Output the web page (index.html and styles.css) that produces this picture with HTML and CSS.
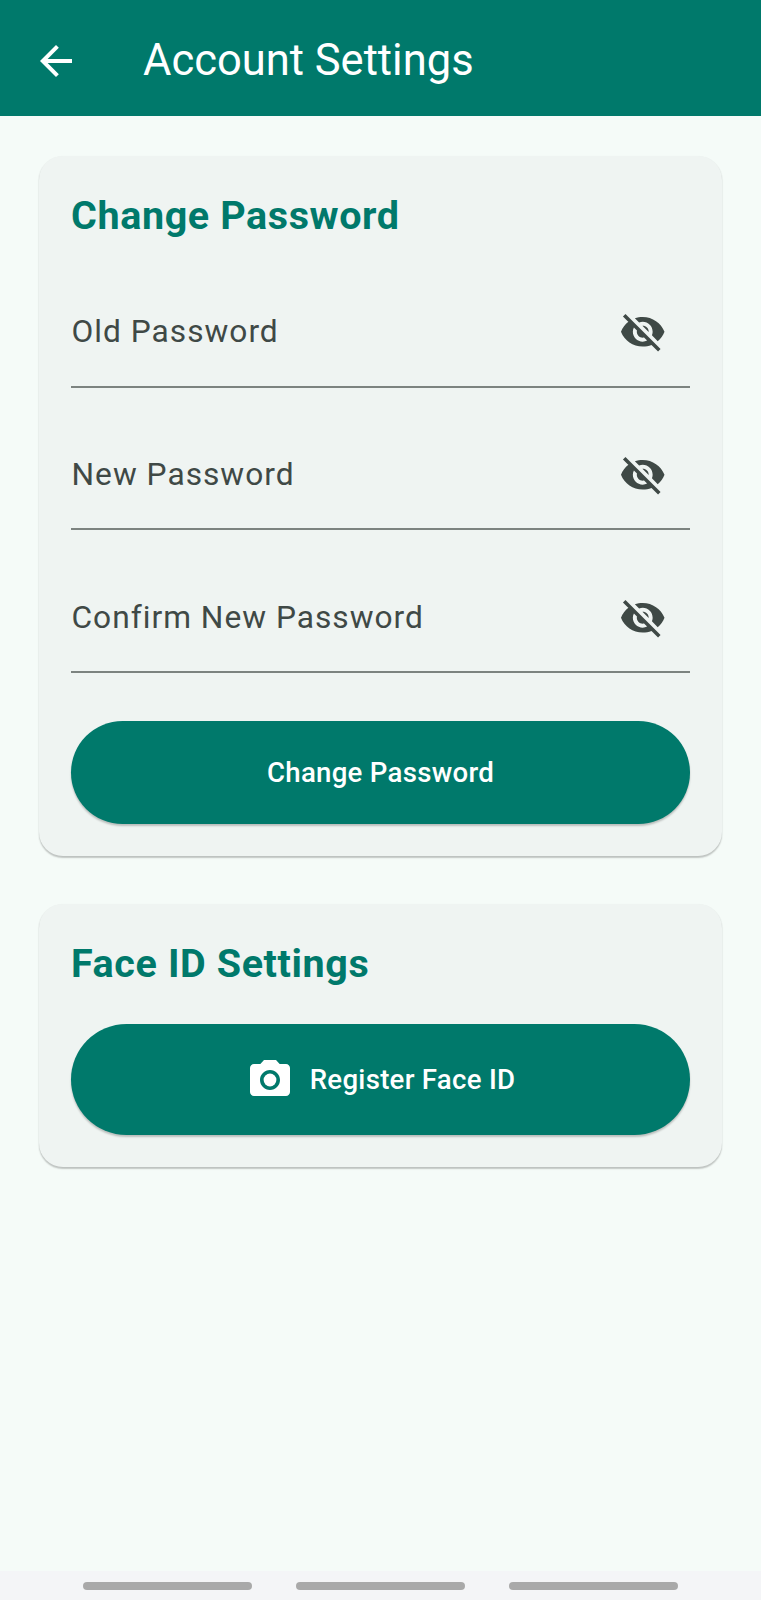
FILE: index.html
```html
<!DOCTYPE html>
<html lang="en">
<head>
<meta charset="utf-8">
<title>Account Settings</title>
<link rel="stylesheet" href="styles.css">
</head>
<body>
<svg class="symbols" aria-hidden="true">
  <symbol id="eye-off" viewBox="0 0 24 24"><path d="M12 7c2.76 0 5 2.24 5 5 0 .65-.13 1.26-.36 1.83l2.92 2.92c1.51-1.26 2.7-2.89 3.43-4.75-1.73-4.39-6-7.5-11-7.5-1.4 0-2.74.25-3.98.7l2.16 2.16C10.74 7.13 11.35 7 12 7zM2 4.27l2.28 2.28.46.46C3.08 8.3 1.78 10.02 1 12c1.73 4.39 6 7.5 11 7.5 1.55 0 3.03-.3 4.38-.84l.42.42L19.73 22 21 20.73 3.27 3 2 4.27zM7.53 9.8l1.55 1.55c-.05.21-.08.43-.08.65 0 1.66 1.34 3 3 3 .22 0 .44-.03.65-.08l1.55 1.55c-.67.33-1.41.53-2.2.53-2.76 0-5-2.24-5-5 0-.79.2-1.53.53-2.2zm4.31-.78l3.15 3.15.02-.16c0-1.66-1.34-3-3-3l-.17.01z"/></symbol>
</svg>
<div class="screen">
  <header class="app-bar">
    <svg class="back" viewBox="0 0 24 24"><path d="M20 11H7.83l5.59-5.59L12 4l-8 8 8 8 1.41-1.41L7.83 13H20v-2z"/></svg>
    <h1 class="title">Account Settings</h1>
  </header>
  <main class="content">
    <section class="card password-card">
      <h2 class="heading">Change Password</h2>
      <div class="fields">
        <div class="field"><span class="label">Old Password</span><svg class="eye"><use href="#eye-off"/></svg></div>
        <div class="field"><span class="label">New Password</span><svg class="eye"><use href="#eye-off"/></svg></div>
        <div class="field"><span class="label">Confirm New Password</span><svg class="eye"><use href="#eye-off"/></svg></div>
      </div>
      <button class="button change" type="button">Change Password</button>
    </section>
    <section class="card face-card">
      <h2 class="heading">Face ID Settings</h2>
      <button class="button register" type="button">
        <svg class="camera" viewBox="0 0 24 24"><circle cx="12" cy="12" r="3.2"/><path d="M9 2L7.17 4H4c-1.1 0-2 .9-2 2v12c0 1.1.9 2 2 2h16c1.1 0 2-.9 2-2V6c0-1.100-.9-2-2-2h-3.170L15 2H9zm3 15c-2.760 0-5-2.240-5-5s2.240-5 5-5 5 2.240 5 5-2.240 5-5 5z"/></svg>
        <span>Register Face ID</span>
      </button>
    </section>
  </main>
  <footer class="nav"><i class="bar"></i><i class="bar"></i><i class="bar"></i></footer>
</div>
</body>
</html>
```
FILE: styles.css
```css
* { box-sizing: border-box; }
body { margin: 0; font-family: Roboto, sans-serif; }
.symbols { display: none; }
svg { fill: currentColor; flex: none; }
.screen { display: flex; flex-direction: column; height: 1600px; background: #f5fbf8; }
.app-bar { display: flex; align-items: center; height: 115.5px; padding: 7px 31px 0 31.5px; background: #00796b; color: #fff; }
.back { width: 48px; height: 48px; }
.title { margin: 0 0 0 63.5px; font-size: 43.5px; font-weight: 400; line-height: 52px; }
.content { flex: 1; padding: 40.5px 39px 0; }
.card { padding: 32px; border-radius: 24px; background: #eff4f2; box-shadow: 0 1.5px 1.5px rgba(0, 0, 0, .2), 0 1px 2px rgba(0, 0, 0, .05); }
.password-card { height: 700px; }
.face-card { height: 263px; margin-top: 48px; }
.heading { margin: 0; font-size: 39.5px; font-weight: 700; line-height: 56px; letter-spacing: .6px; color: #00796b; }
.fields { margin-top: 33.6px; }
.field { display: flex; align-items: center; justify-content: space-between; height: 110px; margin-bottom: 32.8px; padding: 1px 24px 0 .5px; border-bottom: 2px solid #7c8380; color: #3f4946; }
.label { font-size: 31.7px; line-height: 40px; letter-spacing: 1px; }
.eye { width: 47.5px; height: 47.5px; }
.button { display: flex; align-items: center; justify-content: center; width: 100%; border: 0; border-radius: 56px; background: #00796b; color: #fff; font: 500 27.6px/40px Roboto, sans-serif; letter-spacing: .28px; box-shadow: 0 2px 2px rgba(0, 0, 0, .22); }
.change { height: 103px; margin-top: 48px; }
.register { height: 111px; margin-top: 32px; gap: 16px; }
.camera { width: 48px; height: 48px; }
.nav { display: flex; gap: 44.5px; height: 29px; padding: 10.5px 83px 0; background: #f4f5f7; }
.bar { width: 168.5px; height: 8px; border-radius: 4px; background: #a9a9a9; }
```
